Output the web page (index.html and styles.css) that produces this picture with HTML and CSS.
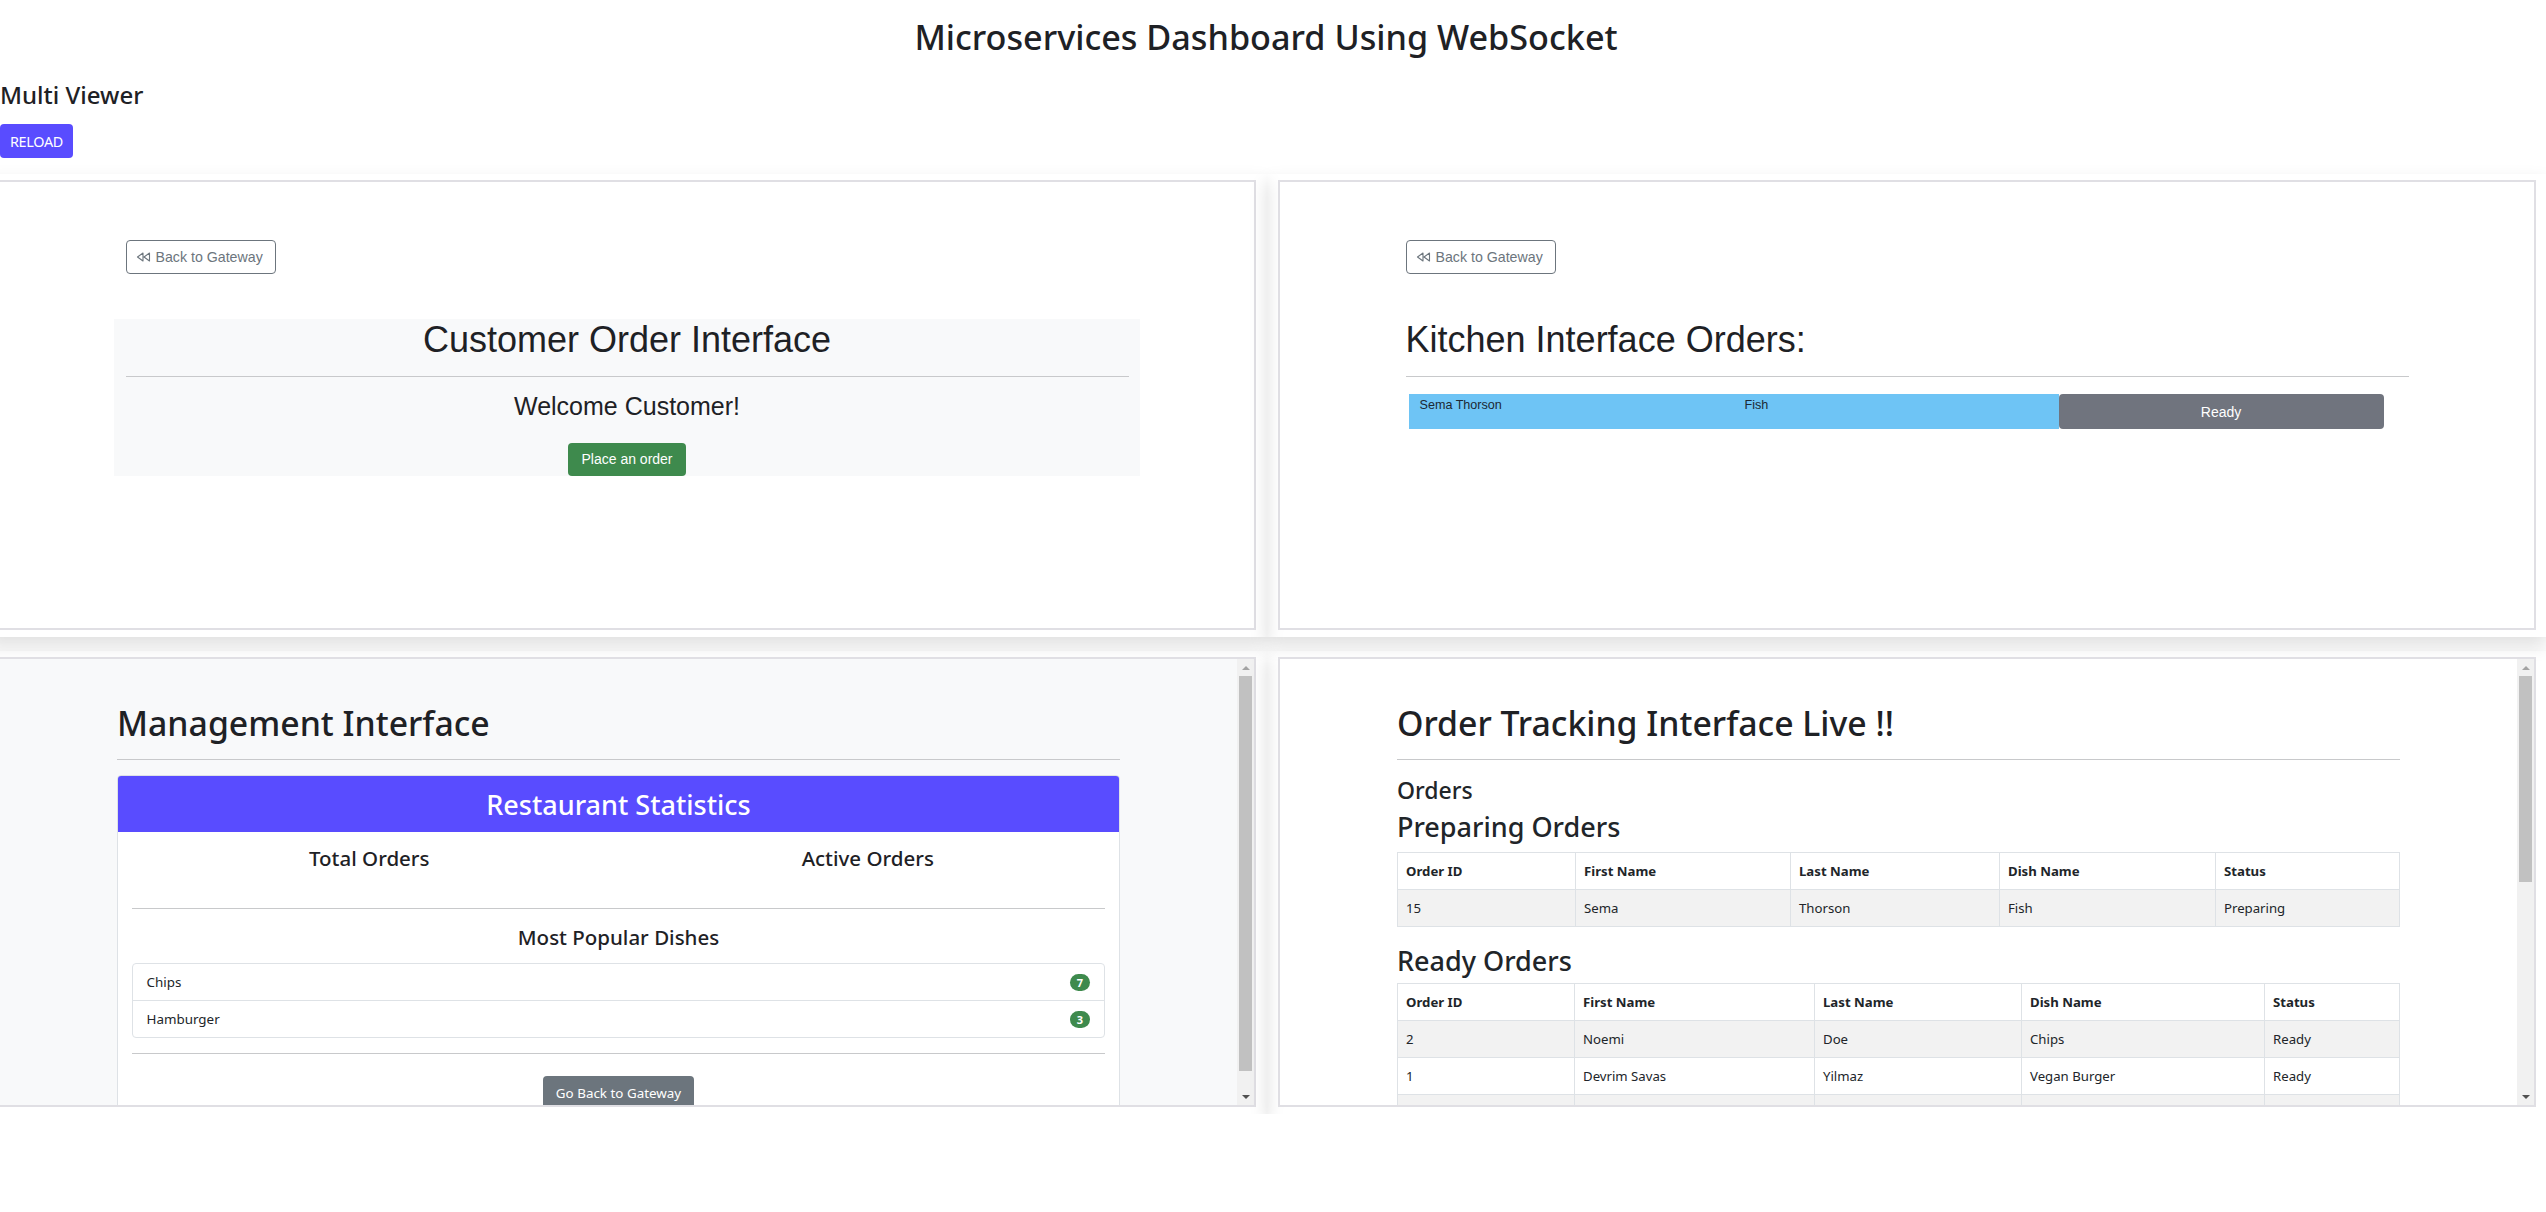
FILE: index.html
```html
<!DOCTYPE html>
<html lang="en">
<head>
<meta charset="utf-8">
<title>Microservices Dashboard Using WebSocket</title>
<link rel="stylesheet" href="styles.css">
</head>
<body>
<header class="page-head">
  <h1 class="page-title">Microservices Dashboard Using WebSocket</h1>
  <h4 class="viewer-title">Multi Viewer</h4>
  <button class="btn-reload" type="button">RELOAD</button>
</header>

<main class="viewer-grid">
  <!-- Customer -->
  <section class="cell">
    <div class="frame">
      <div class="frame-body">
        <div class="wrap back-wrap">
          <button class="btn-back" type="button"><svg class="rewind" viewBox="0 0 15 10" width="15" height="10"><path d="M7 1 L1.5 5 L7 9 Z M13.5 1 L8 5 L13.5 9 Z" fill="none" stroke="#6c757d" stroke-width="1.1" stroke-linejoin="round"/></svg>Back to Gateway</button>
        </div>
        <div class="wrap customer-box">
          <h2 class="arial-h2 center">Customer Order Interface</h2>
          <hr class="rule">
          <h4 class="welcome center">Welcome Customer!</h4>
          <div class="center"><button class="btn-green" type="button">Place an order</button></div>
        </div>
      </div>
    </div>
  </section>

  <!-- Kitchen -->
  <section class="cell">
    <div class="frame">
      <div class="frame-body">
        <div class="wrap back-wrap">
          <button class="btn-back" type="button"><svg class="rewind" viewBox="0 0 15 10" width="15" height="10"><path d="M7 1 L1.5 5 L7 9 Z M13.5 1 L8 5 L13.5 9 Z" fill="none" stroke="#6c757d" stroke-width="1.1" stroke-linejoin="round"/></svg>Back to Gateway</button>
        </div>
        <div class="wrap kitchen">
          <h2 class="arial-h2">Kitchen Interface Orders:</h2>
          <hr class="rule">
          <div class="kitchen-row">
            <div class="k-cell">Sema Thorson</div>
            <div class="k-cell">Fish</div>
            <button class="btn-ready" type="button">Ready</button>
          </div>
        </div>
      </div>
    </div>
  </section>

  <!-- Management -->
  <section class="cell">
    <div class="frame frame-gray">
      <div class="frame-body">
        <div class="wrap mgmt">
          <h2 class="sans-h2">Management Interface</h2>
          <hr class="rule">
          <div class="stat-card">
            <div class="stat-head">Restaurant Statistics</div>
            <div class="stat-body">
              <div class="stat-cols">
                <h5 class="stat-label">Total Orders</h5>
                <h5 class="stat-label">Active Orders</h5>
              </div>
              <hr class="rule">
              <h5 class="stat-label popular">Most Popular Dishes</h5>
              <ul class="dish-list">
                <li class="dish"><span>Chips</span><span class="badge">7</span></li>
                <li class="dish"><span>Hamburger</span><span class="badge">3</span></li>
              </ul>
              <hr class="rule">
              <div class="center"><button class="btn-gray" type="button">Go Back to Gateway</button></div>
            </div>
          </div>
        </div>
      </div>
      <div class="vscroll">
        <div class="sb-btn"><span class="arrow-up"></span></div>
        <div class="sb-track"><div class="sb-thumb thumb-mgmt"></div></div>
        <div class="sb-btn"><span class="arrow-down"></span></div>
      </div>
    </div>
  </section>

  <!-- Order tracking -->
  <section class="cell">
    <div class="frame">
      <div class="frame-body">
        <div class="wrap tracking">
          <h2 class="sans-h2">Order Tracking Interface Live !!</h2>
          <hr class="rule">
          <h4 class="orders-h">Orders</h4>
          <h3 class="section-h">Preparing Orders</h3>
          <table class="otable t-prep">
            <thead><tr><th>Order ID</th><th>First Name</th><th>Last Name</th><th>Dish Name</th><th>Status</th></tr></thead>
            <tbody>
              <tr><td>15</td><td>Sema</td><td>Thorson</td><td>Fish</td><td>Preparing</td></tr>
            </tbody>
          </table>
          <h3 class="section-h">Ready Orders</h3>
          <table class="otable t-ready">
            <thead><tr><th>Order ID</th><th>First Name</th><th>Last Name</th><th>Dish Name</th><th>Status</th></tr></thead>
            <tbody>
              <tr><td>2</td><td>Noemi</td><td>Doe</td><td>Chips</td><td>Ready</td></tr>
              <tr><td>1</td><td>Devrim Savas</td><td>Yilmaz</td><td>Vegan Burger</td><td>Ready</td></tr>
              <tr><td>&nbsp;</td><td></td><td></td><td></td><td></td></tr>
            </tbody>
          </table>
        </div>
      </div>
      <div class="vscroll">
        <div class="sb-btn"><span class="arrow-up"></span></div>
        <div class="sb-track"><div class="sb-thumb thumb-track"></div></div>
        <div class="sb-btn"><span class="arrow-down"></span></div>
      </div>
    </div>
  </section>
</main>
</body>
</html>
```

FILE: styles.css
```css
html, body {
  margin: 0;
  padding: 0;
  background: #ffffff;
  overflow: hidden;
}

body {
  font-family: "Noto Sans", "Open Sans", sans-serif;
  color: #212529;
}

/* ---------- page header ---------- */
.page-head {
  display: flex;
  flex-direction: column;
  align-items: flex-start;
}

.page-title {
  align-self: stretch;
  margin: 14px 14px 0 0;
  font-size: 34.2px;
  line-height: 46px;
  font-weight: 500;
  text-align: center;
  color: #1e2125;
}

.viewer-title {
  margin: 19px 0 0 0;
  font-size: 24px;
  line-height: 32px;
  font-weight: 500;
  color: #1e2125;
}

.btn-reload {
  margin-top: 13px;
  height: 34px;
  width: 73px;
  padding: 0;
  border: none;
  border-radius: 4px;
  background: #594cff;
  color: #ffffff;
  font-family: "Noto Sans", "Open Sans", sans-serif;
  font-size: 14.4px;
  letter-spacing: -0.3px;
}

/* ---------- grid of viewers ---------- */
.viewer-grid {
  display: grid;
  grid-template-columns: 1280px 1280px;
  row-gap: 14px;
  margin: 16px 0 0 -13px;
}

.cell {
  padding: 6px 11px 7px 11px;
  box-shadow: 0 8px 17px rgba(0, 0, 0, 0.13);
}

.frame {
  display: flex;
  width: 1258px;
  height: 450px;
  box-sizing: border-box;
  border: 2px solid #e0dfe4;
  background: #ffffff;
  overflow: hidden;
}

.frame-gray { background: #f8f9fa; }

.frame-body {
  flex: 1;
  min-width: 0;
  overflow: hidden;
}

/* fake classic scrollbar */
.vscroll {
  flex: none;
  width: 17px;
  display: flex;
  flex-direction: column;
  background: #f1f1f1;
}

.sb-btn {
  flex: none;
  height: 17px;
  display: flex;
  align-items: center;
  justify-content: center;
}

.arrow-up {
  width: 0;
  height: 0;
  border-left: 4px solid transparent;
  border-right: 4px solid transparent;
  border-bottom: 4px solid #a3a3a3;
}

.arrow-down {
  width: 0;
  height: 0;
  border-left: 4px solid transparent;
  border-right: 4px solid transparent;
  border-top: 4px solid #505050;
}

.sb-track {
  flex: 1;
  padding: 0 2px;
}

.sb-thumb { background: #c1c1c1; }
.thumb-mgmt { height: 395px; }
.thumb-track { height: 206px; }

.wrap {
  width: 1026px;
  margin: 0 auto;
  padding: 0 11.5px;
  box-sizing: border-box;
}

.center { text-align: center; }

.rule {
  margin: 15px 0;
  border: 0;
  border-top: 1px solid #c8c9cb;
  height: 0;
}

/* ---------- customer / kitchen (Arial pages) ---------- */
.back-wrap { padding-top: 57.5px; }

.btn-back {
  display: inline-flex;
  align-items: center;
  gap: 5px;
  height: 34px;
  width: 150px;
  padding: 0 9px;
  border: 1px solid #6c757d;
  border-radius: 4px;
  background: #ffffff;
  color: #6c757d;
  font-family: "Liberation Sans", Arial, sans-serif;
  font-size: 14.2px;
}

.rewind { flex: none; }

.customer-box {
  margin-top: 45px;
  background: #f8f9fa;
}

.arial-h2 {
  margin: 0;
  font-family: "Liberation Sans", Arial, sans-serif;
  font-size: 36px;
  line-height: 42px;
  font-weight: 400;
  color: #1e2125;
}

.welcome {
  margin: 0;
  font-family: "Liberation Sans", Arial, sans-serif;
  font-size: 25px;
  line-height: 29px;
  font-weight: 400;
  color: #1e2125;
}

.btn-green {
  margin-top: 22px;
  height: 33px;
  width: 118px;
  padding: 0;
  border: none;
  border-radius: 4px;
  background: #3e8a4d;
  color: #ffffff;
  font-family: "Liberation Sans", Arial, sans-serif;
  font-size: 14px;
  vertical-align: top;
}

.kitchen { padding-top: 45.5px; }
.kitchen .rule { margin-bottom: 17px; }

.kitchen-row {
  display: grid;
  grid-template-columns: 325px 325px 325px;
  margin-left: 3px;
  height: 35px;
}

.k-cell {
  background: #6ec4f5;
  padding: 4px 11px;
  font-family: "Liberation Sans", Arial, sans-serif;
  font-size: 12.6px;
  color: #1c2833;
}

.btn-ready {
  border: none;
  border-radius: 4px;
  background: #70747e;
  color: #ffffff;
  font-family: "Liberation Sans", Arial, sans-serif;
  font-size: 14px;
}

/* ---------- management ---------- */
.sans-h2 {
  margin: 0;
  font-size: 33.8px;
  line-height: 42px;
  font-weight: 500;
  color: #1e2125;
}

.mgmt { padding-top: 43px; }
.tracking { padding-top: 43px; }

.stat-card {
  border: 1px solid #dee2e6;
  border-radius: 4px;
  background: #ffffff;
  overflow: hidden;
}

.stat-head {
  height: 56px;
  display: flex;
  align-items: center;
  justify-content: center;
  background: #594cff;
  color: #ffffff;
  font-size: 27px;
  font-weight: 500;
}

.stat-body { padding: 0 14px 12px; }

.stat-cols {
  display: grid;
  grid-template-columns: 1fr 1fr;
  margin: 0 -12px;
  height: 61px;
  box-sizing: border-box;
  padding-top: 13px;
}

.stat-label {
  margin: 0;
  text-align: center;
  font-size: 20.5px;
  line-height: 27px;
  font-weight: 500;
  color: #1e2125;
}

.popular { margin-top: 15px; }

.dish-list {
  list-style: none;
  margin: 12px 0 0 0;
  padding: 0;
  border: 1px solid #dee2e6;
  border-radius: 4px;
}

.dish {
  display: flex;
  justify-content: space-between;
  align-items: center;
  height: 36px;
  padding: 0 14px 0 13.5px;
  font-size: 13.4px;
  color: #212529;
}

.dish + .dish { border-top: 1px solid #dee2e6; }

.badge {
  display: inline-flex;
  align-items: center;
  justify-content: center;
  min-width: 20px;
  height: 17px;
  border-radius: 9px;
  background: #3e8a4d;
  color: #ffffff;
  font-size: 11px;
  font-weight: 700;
}

.btn-gray {
  margin-top: 7px;
  height: 34px;
  width: 151px;
  padding: 0;
  border: none;
  border-radius: 4px;
  background: #6c757d;
  color: #ffffff;
  font-family: "Noto Sans", "Open Sans", sans-serif;
  font-size: 13.4px;
}

/* ---------- tracking ---------- */
.orders-h {
  margin: 0;
  font-size: 23px;
  line-height: 30px;
  font-weight: 500;
}

.section-h {
  margin: 5px 0 8px;
  font-size: 27px;
  line-height: 34px;
  font-weight: 500;
}

.t-prep + .section-h { margin: 17px 0 5px; }

.otable {
  width: 100%;
  border-collapse: collapse;
  font-size: 13.2px;
  color: #212529;
}

.otable th, .otable td {
  height: 37px;
  box-sizing: border-box;
  padding: 0 8px;
  border: 1px solid #dee2e6;
  text-align: left;
  vertical-align: middle;
}

.otable th { font-weight: 700; }
.otable tbody tr:nth-child(odd) { background: #f2f2f2; }

.t-prep th:nth-child(1) { width: 178px; }
.t-prep th:nth-child(2) { width: 215px; }
.t-prep th:nth-child(3) { width: 209px; }
.t-prep th:nth-child(4) { width: 216px; }

.t-ready th:nth-child(1) { width: 177px; }
.t-ready th:nth-child(2) { width: 240px; }
.t-ready th:nth-child(3) { width: 207px; }
.t-ready th:nth-child(4) { width: 243px; }
```
